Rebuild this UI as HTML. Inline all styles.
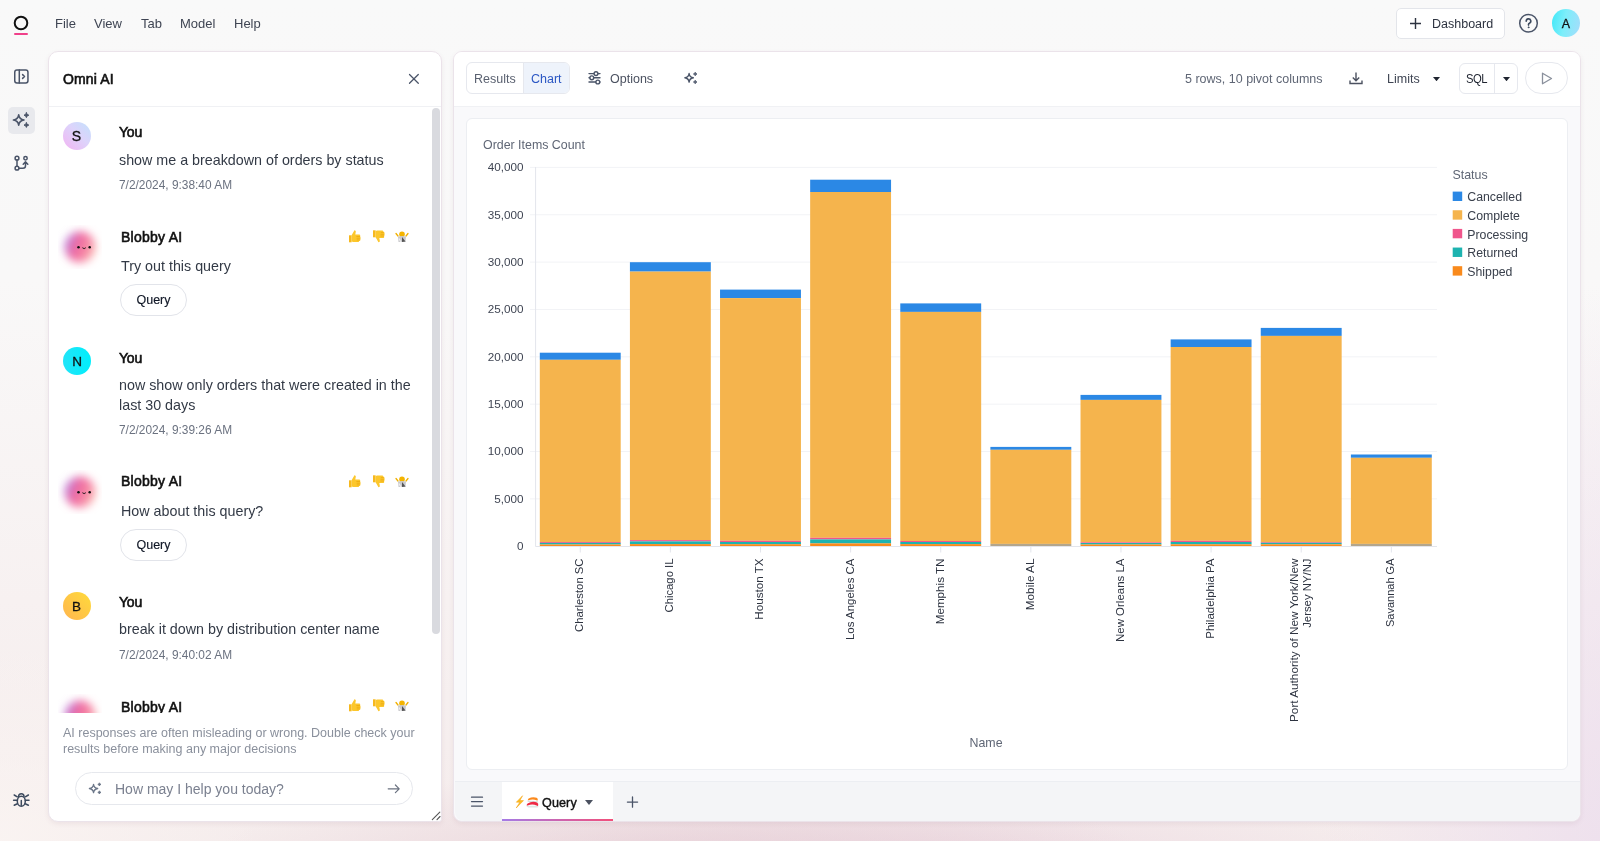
<!DOCTYPE html>
<html><head><meta charset="utf-8">
<style>
*{box-sizing:border-box;margin:0;padding:0}
html,body{width:1600px;height:841px;overflow:hidden}
body{font-family:"Liberation Sans",sans-serif;position:relative;
 background:radial-gradient(ellipse 480px 100px at 680px 870px,rgba(222,190,202,.55),rgba(222,190,202,0)),radial-gradient(ellipse 320px 560px at 1640px 840px,rgba(234,218,238,.7),rgba(234,218,238,0)),radial-gradient(ellipse 450px 80px at 950px 862px,rgba(232,208,220,.6),rgba(232,208,220,0)),radial-gradient(ellipse 260px 200px at 0px 841px,rgba(250,244,242,.9),rgba(250,244,242,0)),linear-gradient(180deg,#f9f9f9 0,#f9f8f8 280px,#f7f1f1 600px,#f5ecec 841px);color:#1f2430}
.a{position:absolute;white-space:nowrap}
.menu{font-size:13px;color:#3f4553;top:16px}
.panel{position:absolute;background:#fff;border:1px solid #ebe3ea;border-radius:9px;box-shadow:0 2px 5px rgba(120,60,90,.08)}
.hd{font-weight:normal;font-size:14px;color:#111;-webkit-text-stroke:0.6px #111}
.msg{font-size:14.3px;color:#333a46}
.ts{font-size:11.9px;color:#6b7280}
.qbtn{position:absolute;border:1px solid #e2e4ea;border-radius:16px;font-size:12.5px;color:#111827;text-align:center;background:#fff;-webkit-text-stroke:.15px #111827}
.tb{font-size:12.5px;color:#4b5160}
.blob{width:30px;height:30px;border-radius:50%;background:radial-gradient(circle at 60% 55%,#f0609a 0%,#f28ac0 35%,rgba(230,150,220,.6) 60%,rgba(255,255,255,0) 75%);filter:blur(2px)}
.blob::after{content:"\2022\2323\2022";position:absolute;left:14px;top:8px;font-size:7px;color:#111;letter-spacing:-1px}
.emo{width:62px;height:14px}
#chart text{font-family:"Liberation Sans",sans-serif}
.yl{font-size:11.7px;fill:#3f4553}
.xl{font-size:11.2px;fill:#2d3340}
.ax{font-size:12.4px;fill:#5f6675}
.lg{font-size:12.3px;fill:#3a404c}
</style></head>
<body>
<div id="wrap" style="position:absolute;left:0;top:0;width:1600px;height:841px;will-change:transform">
<!-- top menu -->
<svg class="a" style="left:13px;top:15px" width="16" height="21" viewBox="0 0 16 21">
 <circle cx="8" cy="8" r="6.3" fill="none" stroke="#111" stroke-width="2"/>
 <rect x="1" y="18" width="14" height="2" rx="1" fill="#f0408a"/>
</svg>
<div class="a menu" style="left:55px">File</div>
<div class="a menu" style="left:94px">View</div>
<div class="a menu" style="left:141px">Tab</div>
<div class="a menu" style="left:180px">Model</div>
<div class="a menu" style="left:234px">Help</div>

<!-- left rail -->
<div class="a" style="left:8px;top:106.5px;width:26.5px;height:27.5px;background:#e8e9ed;border-radius:5px"></div>
<svg class="a" style="left:0;top:0" width="48" height="841" viewBox="0 0 48 841" fill="none" stroke="#4a5468" stroke-width="1.5" stroke-linecap="round" stroke-linejoin="round">
 <rect x="14.75" y="70" width="13.2" height="13" rx="2.2"/><line x1="19.3" y1="70" x2="19.3" y2="83"/><path d="M22.6 74.6l1.9 1.9-1.9 1.9"/>
 <path d="M18.7 114.8Q19.3 119.4 24 120Q19.3 120.6 18.7 125.2Q18.1 120.6 13.4 120Q18.1 119.4 18.7 114.8Z" stroke-width="1.6"/>
 <path d="M26.4 112.8Q26.6 115 28.8 115.2Q26.6 115.4 26.4 117.6Q26.2 115.4 24 115.2Q26.2 115 26.4 112.8Z" fill="#4a5468" stroke-width="1"/>
 <path d="M26.4 122.8Q26.6 124.9 28.8 125.1Q26.6 125.3 26.4 127.4Q26.2 125.3 24 125.1Q26.2 124.9 26.4 122.8Z" fill="#4a5468" stroke-width="1"/>
 <circle cx="17" cy="158.2" r="1.9"/><circle cx="17" cy="168.2" r="1.9"/><circle cx="25.5" cy="158.2" r="1.7"/>
 <path d="M17 160.1v6.2M18.9 168.2h4.1a2.5 2.5 0 0 0 2.5-2.5v-3.6M23.2 164.2l2.3-2.3 2.3 2.3"/>
 <g stroke="#3d4a5e" stroke-width="1.5">
 <path d="M18.6 796.6a2.7 2.9 0 0 1 5.4 0"/><ellipse cx="21.3" cy="801.2" rx="4" ry="5"/><path d="M21.3 800.6v4.6M13.6 800.3h3.7M25.3 800.3h3.7M14.2 795l3.1 1.8M28.4 795l-3.1 1.8M14.2 805.3l3.2-1.5M28.4 805.3l-3.2-1.5"/>
 </g>
</svg>
<!-- left panel -->
<div class="panel" style="left:47.5px;top:51px;width:394.3px;height:770.5px;border-radius:10px 10px 3px 10px"></div>
<div class="a hd" style="left:63px;top:71px;letter-spacing:.14px">Omni AI</div>
<svg class="a" style="left:408px;top:73px" width="12" height="12" viewBox="0 0 12 12" stroke="#4a5468" stroke-width="1.25" stroke-linecap="round"><path d="M1.5 1.5l8.8 8.8M10.3 1.5l-8.8 8.8"/></svg>
<div class="a" style="left:49px;top:106px;width:392px;height:1px;background:#f0f1f4"></div>
<div class="a" style="left:432px;top:108px;width:8px;height:526px;background:#d9dadf;border-radius:4px"></div>


<!-- messages -->
<div class="a" style="left:63px;top:122px;width:28px;height:28px;border-radius:50%;background:linear-gradient(45deg,#f3b3f2 0%,#ddd3fb 55%,#c2e1fc 100%)"></div>
<div class="a" style="left:62.5px;top:128px;width:28px;text-align:center;font-size:14px;color:#111;-webkit-text-stroke:.3px #111">S</div>
<div class="a hd" style="left:119px;top:124px;letter-spacing:-.2px">You</div>
<div class="a msg" style="left:119px;top:152px">show me a breakdown of orders by status</div>
<div class="a ts" style="left:119px;top:178px">7/2/2024, 9:38:40 AM</div>

<svg class="a" style="left:58px;top:225px" width="44" height="44" viewBox="0 0 44 44"><defs><filter id="bl1" x="-50%" y="-50%" width="200%" height="200%"><feGaussianBlur stdDeviation="4.3"/></filter><linearGradient id="bg1" x1="0" y1="0.35" x2="1" y2="0.75"><stop offset="0" stop-color="#b583e2"/><stop offset="0.38" stop-color="#f0689e"/><stop offset="0.7" stop-color="#f68aa8"/><stop offset="1" stop-color="#fcc0aa"/></linearGradient></defs><circle cx="22" cy="22" r="15.5" fill="url(#bg1)" filter="url(#bl1)"/><circle cx="20.5" cy="22.3" r="1.25" fill="#111"/><circle cx="31.7" cy="22.3" r="1.25" fill="#111"/><path d="M24.4 22.7q1.7 1.9 3.4 0" fill="none" stroke="#111" stroke-width=".9"/></svg>
<div class="a hd" style="left:121px;top:229px;letter-spacing:.26px">Blobby AI</div>
<svg class="a" style="left:347px;top:229px" width="63" height="15" viewBox="0 0 63 15">
<g><path d="M2 6.3h2.6v7H2z" fill="#f6b81e"/><path d="M4.6 6.2 6.9 2.2Q7.2 1.2 8.1 1.4 9 1.7 8.8 2.8L8.3 5.4h3.9q1.1.1 1 1.2l-.1.6q.5.4.3 1.1.4.5.1 1.1.3.6-.1 1.2.2 1.2-1 1.3l-.3.2-.4.9H6.3l-1.7-.6z" fill="#fcc72c"/><path d="M9.4 7.5h3.6M9.6 9.2h3.3M9.8 10.9h2.9" stroke="#e59f06" stroke-width=".6"/></g>
<g transform="translate(24 0)"><path d="M2 1.3h2.6v7H2z" fill="#f6b81e"/><path d="M4.6 8.3 6.9 12.3Q7.2 13.3 8.1 13.1 9 12.8 8.8 11.7L8.3 9.1h3.9q1.1-.1 1-1.2l-.1-.6q.5-.4.3-1.1.4-.5.1-1.1.3-.6-.1-1.2.2-1.2-1-1.3l-.3-.2-.4-.9H6.3l-1.7.6z" fill="#fcc72c" transform="translate(0 0)"/><path d="M9.4 7h3.6M9.6 5.3h3.3M9.8 3.6h2.9" stroke="#e59f06" stroke-width=".6"/></g>
<g transform="translate(48 1)"><circle cx="7" cy="4.3" r="2.8" fill="#f4b400"/><path d="M1 3.5 3 6 M13 3.5 11 6" stroke="#f0b000" stroke-width="1.3" stroke-linecap="round"/><path d="M3 6.5Q7 5.5 11 6.5L10.5 12H3.5z" fill="#c9c9cc"/><path d="M7 7v5l3.5-.5" fill="#555" /><path d="M4 8.5 6 12" stroke="#eee" stroke-width="1.2"/></g>
</svg>
<div class="a msg" style="left:121px;top:258px">Try out this query</div>
<div class="qbtn" style="left:120px;top:284px;width:67px;height:32px;line-height:30px">Query</div>

<div class="a" style="left:63px;top:347px;width:28px;height:28px;border-radius:50%;background:linear-gradient(90deg,#22e4f8,#00effc)"></div>
<div class="a" style="left:63px;top:353.5px;width:28px;text-align:center;font-size:13.5px;color:#111;-webkit-text-stroke:.3px #111">N</div>
<div class="a hd" style="left:119px;top:350px;letter-spacing:-.2px">You</div>
<div class="a msg" style="left:119px;top:376px;line-height:19.6px">now show only orders that were created in the<br>last 30 days</div>
<div class="a ts" style="left:119px;top:423px">7/2/2024, 9:39:26 AM</div>

<svg class="a" style="left:58px;top:470px" width="44" height="44" viewBox="0 0 44 44"><defs><filter id="bl2" x="-50%" y="-50%" width="200%" height="200%"><feGaussianBlur stdDeviation="4.3"/></filter><linearGradient id="bg2" x1="0" y1="0.35" x2="1" y2="0.75"><stop offset="0" stop-color="#b583e2"/><stop offset="0.38" stop-color="#f0689e"/><stop offset="0.7" stop-color="#f68aa8"/><stop offset="1" stop-color="#fcc0aa"/></linearGradient></defs><circle cx="22" cy="22" r="15.5" fill="url(#bg2)" filter="url(#bl2)"/><circle cx="20.5" cy="22.3" r="1.25" fill="#111"/><circle cx="31.7" cy="22.3" r="1.25" fill="#111"/><path d="M24.4 22.7q1.7 1.9 3.4 0" fill="none" stroke="#111" stroke-width=".9"/></svg>
<div class="a hd" style="left:121px;top:473px;letter-spacing:.26px">Blobby AI</div>
<svg class="a" style="left:347px;top:474px" width="63" height="15" viewBox="0 0 63 15">
<g><path d="M2 6.3h2.6v7H2z" fill="#f6b81e"/><path d="M4.6 6.2 6.9 2.2Q7.2 1.2 8.1 1.4 9 1.7 8.8 2.8L8.3 5.4h3.9q1.1.1 1 1.2l-.1.6q.5.4.3 1.1.4.5.1 1.1.3.6-.1 1.2.2 1.2-1 1.3l-.3.2-.4.9H6.3l-1.7-.6z" fill="#fcc72c"/><path d="M9.4 7.5h3.6M9.6 9.2h3.3M9.8 10.9h2.9" stroke="#e59f06" stroke-width=".6"/></g>
<g transform="translate(24 0)"><path d="M2 1.3h2.6v7H2z" fill="#f6b81e"/><path d="M4.6 8.3 6.9 12.3Q7.2 13.3 8.1 13.1 9 12.8 8.8 11.7L8.3 9.1h3.9q1.1-.1 1-1.2l-.1-.6q.5-.4.3-1.1.4-.5.1-1.1.3-.6-.1-1.2.2-1.2-1-1.3l-.3-.2-.4-.9H6.3l-1.7.6z" fill="#fcc72c" transform="translate(0 0)"/><path d="M9.4 7h3.6M9.6 5.3h3.3M9.8 3.6h2.9" stroke="#e59f06" stroke-width=".6"/></g>
<g transform="translate(48 1)"><circle cx="7" cy="4.3" r="2.8" fill="#f4b400"/><path d="M1 3.5 3 6 M13 3.5 11 6" stroke="#f0b000" stroke-width="1.3" stroke-linecap="round"/><path d="M3 6.5Q7 5.5 11 6.5L10.5 12H3.5z" fill="#c9c9cc"/><path d="M7 7v5l3.5-.5" fill="#555" /><path d="M4 8.5 6 12" stroke="#eee" stroke-width="1.2"/></g>
</svg>
<div class="a msg" style="left:121px;top:503px">How about this query?</div>
<div class="qbtn" style="left:120px;top:529px;width:67px;height:32px;line-height:30px">Query</div>

<div class="a" style="left:63px;top:592px;width:28px;height:28px;border-radius:50%;background:linear-gradient(225deg,#ffdb3a,#ffb550)"></div>
<div class="a" style="left:62.5px;top:598.5px;width:28px;text-align:center;font-size:13.5px;color:#111;-webkit-text-stroke:.3px #111">B</div>
<div class="a hd" style="left:119px;top:594px;letter-spacing:-.2px">You</div>
<div class="a msg" style="left:119px;top:621px">break it down by distribution center name</div>
<div class="a ts" style="left:119px;top:648px">7/2/2024, 9:40:02 AM</div>

<div class="a" style="left:49px;top:690px;width:380px;height:22.7px;overflow:hidden">
 <svg class="a" style="left:9px;top:4px" width="44" height="44" viewBox="0 0 44 44"><defs><filter id="bl3" x="-50%" y="-50%" width="200%" height="200%"><feGaussianBlur stdDeviation="4.3"/></filter><linearGradient id="bg3" x1="0" y1="0.35" x2="1" y2="0.75"><stop offset="0" stop-color="#b583e2"/><stop offset="0.38" stop-color="#f0689e"/><stop offset="0.7" stop-color="#f68aa8"/><stop offset="1" stop-color="#fcc0aa"/></linearGradient></defs><circle cx="22" cy="22" r="15.5" fill="url(#bg3)" filter="url(#bl3)"/><circle cx="20.5" cy="22.3" r="1.25" fill="#111"/><circle cx="31.7" cy="22.3" r="1.25" fill="#111"/><path d="M24.4 22.7q1.7 1.9 3.4 0" fill="none" stroke="#111" stroke-width=".9"/></svg>
 <div class="a hd" style="left:72px;top:9px;letter-spacing:.26px">Blobby AI</div>
 <svg class="a" style="left:298px;top:8px" width="63" height="15" viewBox="0 0 63 15">
<g><path d="M2 6.3h2.6v7H2z" fill="#f6b81e"/><path d="M4.6 6.2 6.9 2.2Q7.2 1.2 8.1 1.4 9 1.7 8.8 2.8L8.3 5.4h3.9q1.1.1 1 1.2l-.1.6q.5.4.3 1.1.4.5.1 1.1.3.6-.1 1.2.2 1.2-1 1.3l-.3.2-.4.9H6.3l-1.7-.6z" fill="#fcc72c"/><path d="M9.4 7.5h3.6M9.6 9.2h3.3M9.8 10.9h2.9" stroke="#e59f06" stroke-width=".6"/></g>
<g transform="translate(24 0)"><path d="M2 1.3h2.6v7H2z" fill="#f6b81e"/><path d="M4.6 8.3 6.9 12.3Q7.2 13.3 8.1 13.1 9 12.8 8.8 11.7L8.3 9.1h3.9q1.1-.1 1-1.2l-.1-.6q.5-.4.3-1.1.4-.5.1-1.1.3-.6-.1-1.2.2-1.2-1-1.3l-.3-.2-.4-.9H6.3l-1.7.6z" fill="#fcc72c" transform="translate(0 0)"/><path d="M9.4 7h3.6M9.6 5.3h3.3M9.8 3.6h2.9" stroke="#e59f06" stroke-width=".6"/></g>
<g transform="translate(48 1)"><circle cx="7" cy="4.3" r="2.8" fill="#f4b400"/><path d="M1 3.5 3 6 M13 3.5 11 6" stroke="#f0b000" stroke-width="1.3" stroke-linecap="round"/><path d="M3 6.5Q7 5.5 11 6.5L10.5 12H3.5z" fill="#c9c9cc"/><path d="M7 7v5l3.5-.5" fill="#555" /><path d="M4 8.5 6 12" stroke="#eee" stroke-width="1.2"/></g>
</svg>
</div>
<div class="a" style="left:63px;top:726px;font-size:12.5px;line-height:15.8px;color:#8a909c">AI responses are often misleading or wrong. Double check your<br>results before making any major decisions</div>
<div class="a" style="left:75.3px;top:772px;width:338.2px;height:32.5px;border:1px solid #e6e8ed;border-radius:17px;background:#fff"></div>
<svg class="a" style="left:84px;top:778px" width="24" height="22" viewBox="84 778 24 22" fill="none" stroke="#6b7688" stroke-width="1.3" stroke-linejoin="round">
 <path d="M93.55 784.3Q94 788 97.7 788.5Q94 789 93.55 792.7Q93.1 789 89.4 788.5Q93.1 788 93.55 784.3Z"/>
 <path d="M99.4 782.8Q99.6 784.2 101 784.4Q99.6 784.6 99.4 786Q99.2 784.6 97.8 784.4Q99.2 784.2 99.4 782.8Z" fill="#6b7688" stroke-width=".8"/>
 <path d="M99.4 790.8Q99.6 792.2 101 792.4Q99.6 792.6 99.4 794Q99.2 792.6 97.8 792.4Q99.2 792.2 99.4 790.8Z" fill="#6b7688" stroke-width=".8"/>
</svg>
<div class="a" style="left:115px;top:781px;font-size:14px;color:#7b8190">How may I help you today?</div>
<svg class="a" style="left:386px;top:782px" width="15" height="14" viewBox="386 782 15 14" fill="none" stroke="#6b7280" stroke-width="1.2" stroke-linecap="round" stroke-linejoin="round"><path d="M388.2 788.8h11M395.4 785 399.2 788.8 395.4 792.6"/></svg>
<svg class="a" style="left:430px;top:810px" width="12" height="12" viewBox="430 810 12 12" stroke="#555" stroke-width="1.1" stroke-linecap="round"><path d="M439.8 812.1 432.3 819.6M440 816.5 437 819.6"/></svg>

<!-- top right -->
<div class="a" style="left:1396px;top:8px;width:109px;height:31px;border:1px solid #e3e5ea;border-radius:5px;background:#fff"></div>
<svg class="a" style="left:1409px;top:17px" width="13" height="13" viewBox="0 0 13 13" stroke="#2d3340" stroke-width="1.4"><path d="M6.5 1v11M1 6.5h11"/></svg>
<div class="a tb" style="left:1432px;top:17px;color:#2d3340">Dashboard</div>
<svg class="a" style="left:1510px;top:5px" width="40" height="40" viewBox="1510 5 40 40" fill="none" stroke="#4a5468" stroke-width="1.5" stroke-linecap="round"><circle cx="1528.5" cy="23.2" r="8.8"/><path d="M1526.2 21.2a2.3 2.3 0 1 1 3.2 2.1q-.9.4-.9 1.3v.5" stroke-width="1.6" stroke="#3d4a5e"/><circle cx="1528.5" cy="27.3" r=".45" fill="#3d4a5e" stroke="#3d4a5e" stroke-width="1"/></svg>
<div class="a" style="left:1552px;top:9.3px;width:27.6px;height:27.6px;border-radius:50%;background:linear-gradient(100deg,#3fe8f8 0%,#7deefa 45%,#a6dcfb 100%)"></div>
<div class="a" style="left:1552px;top:17px;width:28px;text-align:center;font-size:12.4px;color:#111;-webkit-text-stroke:.3px #111">A</div>

<!-- right panel -->
<div class="panel" style="left:453px;top:51px;width:1128px;height:771px;background:#f9f9fb;overflow:hidden">
 <div class="a" style="left:0;top:0;width:1128px;height:55px;background:#fff;border-bottom:1px solid #f0f1f4"></div>
</div>
<div class="a" style="left:466px;top:62px;width:104px;height:32px;border:1px solid #e6e8ee;border-radius:6px;overflow:hidden;background:#fff">
 <div class="a" style="left:56px;top:0;width:48px;height:32px;background:#eef3fb;border-left:1px solid #e6e8ee"></div>
</div>
<div class="a tb" style="left:474px;top:72px;color:#5a6170">Results</div>
<div class="a tb" style="left:531px;top:72px;color:#2b57c4">Chart</div>
<svg class="a" style="left:580px;top:66px" width="122" height="24" viewBox="580 66 122 24" fill="none" stroke="#4a5468" stroke-width="1.4" stroke-linecap="round">
 <path d="M589 73.6h11M589 77.8h11M589 82h11"/><circle cx="596" cy="73.6" r="1.9" fill="#fff"/><circle cx="591.8" cy="77.8" r="1.9" fill="#fff"/><circle cx="597.8" cy="82" r="1.9" fill="#fff"/>
</svg>
<div class="a tb" style="left:610px;top:72px;color:#4b5160">Options</div>
<svg class="a" style="left:680px;top:66px" width="24" height="24" viewBox="680 66 24 24" fill="none" stroke="#4a5468" stroke-width="1.4" stroke-linejoin="round">
 <path d="M689.1 73.5Q689.6 77.3 693.3 77.8Q689.6 78.3 689.1 82.1Q688.6 78.3 684.9 77.8Q688.6 77.3 689.1 73.5Z"/>
 <path d="M695.2 72.2Q695.4 73.8 697 74Q695.4 74.2 695.2 75.8Q695 74.2 693.4 74Q695 73.8 695.2 72.2Z" fill="#4a5468" stroke-width=".8"/>
 <path d="M695.2 80.2Q695.4 81.8 697 82Q695.4 82.2 695.2 83.8Q695 82.2 693.4 82Q695 81.8 695.2 80.2Z" fill="#4a5468" stroke-width=".8"/>
</svg>
<div class="a tb" style="left:1185px;top:72px;color:#5f6675">5 rows, 10 pivot columns</div>
<svg class="a" style="left:1349px;top:72px" width="14" height="13" viewBox="0 0 14 13" fill="none" stroke="#4b5160" stroke-width="1.4"><path d="M7 .5v8M3.8 5.5 7 8.7l3.2-3.2M1 8.5v3h12v-3"/></svg>
<div class="a tb" style="left:1387px;top:72px;color:#3f4553">Limits</div>
<svg class="a" style="left:1433px;top:76.5px" width="7" height="4.5" viewBox="0 0 7 4.5"><path d="M0 0h7L3.5 4.2z" fill="#1f2430"/></svg>
<div class="a" style="left:1459px;top:63px;width:59px;height:31px;border:1px solid #e6e8ee;border-radius:6px;background:#fff"><div class="a" style="left:34px;top:0;width:1px;height:29px;background:#e6e8ee"></div></div>
<div class="a tb" style="left:1466px;top:72px;color:#1f2430;letter-spacing:-0.6px;transform:scaleX(.9);transform-origin:0 0">SQL</div>
<svg class="a" style="left:1502.5px;top:76.5px" width="7" height="4.5" viewBox="0 0 7 4.5"><path d="M0 0h7L3.5 4.2z" fill="#1f2430"/></svg>
<div class="a" style="left:1525px;top:62px;width:43px;height:32px;border:1px solid #e6e8ee;border-radius:16px;background:#fff"></div>
<svg class="a" style="left:1541px;top:72px" width="12" height="13" viewBox="0 0 12 13" fill="none" stroke="#8a909c" stroke-width="1.3" stroke-linejoin="round"><path d="M1.5 1.2v10.6L10.5 6.5z"/></svg>

<!-- chart card -->
<div class="a" style="left:466px;top:118px;width:1102px;height:652px;background:#fff;border:1px solid #eceef2;border-radius:6px"></div>
<svg class="a" style="left:0;top:0" width="1600" height="841" id="chart"><line x1="530" y1="498.89" x2="1437" y2="498.89" stroke="#f2f3f6" stroke-width="1"/>
<text x="523.5" y="502.79" text-anchor="end" class="yl">5,000</text>
<line x1="530" y1="451.54" x2="1437" y2="451.54" stroke="#f2f3f6" stroke-width="1"/>
<text x="523.5" y="455.44" text-anchor="end" class="yl">10,000</text>
<line x1="530" y1="404.18" x2="1437" y2="404.18" stroke="#f2f3f6" stroke-width="1"/>
<text x="523.5" y="408.08" text-anchor="end" class="yl">15,000</text>
<line x1="530" y1="356.82" x2="1437" y2="356.82" stroke="#f2f3f6" stroke-width="1"/>
<text x="523.5" y="360.72" text-anchor="end" class="yl">20,000</text>
<line x1="530" y1="309.47" x2="1437" y2="309.47" stroke="#f2f3f6" stroke-width="1"/>
<text x="523.5" y="313.37" text-anchor="end" class="yl">25,000</text>
<line x1="530" y1="262.11" x2="1437" y2="262.11" stroke="#f2f3f6" stroke-width="1"/>
<text x="523.5" y="266.01" text-anchor="end" class="yl">30,000</text>
<line x1="530" y1="214.76" x2="1437" y2="214.76" stroke="#f2f3f6" stroke-width="1"/>
<text x="523.5" y="218.66" text-anchor="end" class="yl">35,000</text>
<line x1="530" y1="167.40" x2="1437" y2="167.40" stroke="#f2f3f6" stroke-width="1"/>
<text x="523.5" y="171.30" text-anchor="end" class="yl">40,000</text>
<text x="523.5" y="550.1" text-anchor="end" class="yl">0</text>
<line x1="535.6" y1="167" x2="535.6" y2="546.5" stroke="#e3e5ec" stroke-width="1"/>
<rect x="539.80" y="352.7" width="80.9" height="7.10" fill="#2b88e5"/>
<rect x="539.80" y="359.8" width="80.9" height="182.20" fill="#f5b44d"/>
<rect x="539.80" y="542.0" width="80.9" height="0.90" fill="#f0568c"/>
<rect x="539.80" y="542.9" width="80.9" height="1.60" fill="#1db3b0"/>
<rect x="539.80" y="544.5" width="80.9" height="1.50" fill="#f98a1c"/>
<line x1="580.25" y1="546" x2="580.25" y2="552.5" stroke="#e3e5ec" stroke-width="1"/>
<text transform="translate(583.25,558.5) rotate(-90)" text-anchor="end" class="xl" style="font-size:11.3px">Charleston SC</text>
<rect x="629.92" y="262.2" width="80.9" height="9.40" fill="#2b88e5"/>
<rect x="629.92" y="271.6" width="80.9" height="268.50" fill="#f5b44d"/>
<rect x="629.92" y="540.1" width="80.9" height="1.30" fill="#f0568c"/>
<rect x="629.92" y="541.4" width="80.9" height="2.70" fill="#1db3b0"/>
<rect x="629.92" y="544.1" width="80.9" height="1.90" fill="#f98a1c"/>
<line x1="670.37" y1="546" x2="670.37" y2="552.5" stroke="#e3e5ec" stroke-width="1"/>
<text transform="translate(673.37,558.5) rotate(-90)" text-anchor="end" class="xl" style="font-size:11.3px">Chicago IL</text>
<rect x="720.04" y="289.6" width="80.9" height="8.50" fill="#2b88e5"/>
<rect x="720.04" y="298.1" width="80.9" height="242.70" fill="#f5b44d"/>
<rect x="720.04" y="540.8" width="80.9" height="1.20" fill="#f0568c"/>
<rect x="720.04" y="542.0" width="80.9" height="2.20" fill="#1db3b0"/>
<rect x="720.04" y="544.2" width="80.9" height="1.80" fill="#f98a1c"/>
<line x1="760.49" y1="546" x2="760.49" y2="552.5" stroke="#e3e5ec" stroke-width="1"/>
<text transform="translate(763.49,558.5) rotate(-90)" text-anchor="end" class="xl" style="font-size:11.64px">Houston TX</text>
<rect x="810.16" y="179.7" width="80.9" height="12.30" fill="#2b88e5"/>
<rect x="810.16" y="192.0" width="80.9" height="345.80" fill="#f5b44d"/>
<rect x="810.16" y="537.8" width="80.9" height="1.60" fill="#f0568c"/>
<rect x="810.16" y="539.4" width="80.9" height="4.00" fill="#1db3b0"/>
<rect x="810.16" y="543.4" width="80.9" height="2.60" fill="#f98a1c"/>
<line x1="850.61" y1="546" x2="850.61" y2="552.5" stroke="#e3e5ec" stroke-width="1"/>
<text transform="translate(853.61,558.5) rotate(-90)" text-anchor="end" class="xl" style="font-size:11.46px">Los Angeles CA</text>
<rect x="900.28" y="303.4" width="80.9" height="8.50" fill="#2b88e5"/>
<rect x="900.28" y="311.9" width="80.9" height="229.10" fill="#f5b44d"/>
<rect x="900.28" y="541.0" width="80.9" height="1.00" fill="#f0568c"/>
<rect x="900.28" y="542.0" width="80.9" height="2.10" fill="#1db3b0"/>
<rect x="900.28" y="544.1" width="80.9" height="1.90" fill="#f98a1c"/>
<line x1="940.73" y1="546" x2="940.73" y2="552.5" stroke="#e3e5ec" stroke-width="1"/>
<text transform="translate(943.73,558.5) rotate(-90)" text-anchor="end" class="xl" style="font-size:11.65px">Memphis TN</text>
<rect x="990.40" y="446.9" width="80.9" height="2.90" fill="#2b88e5"/>
<rect x="990.40" y="449.8" width="80.9" height="94.10" fill="#f5b44d"/>
<rect x="990.40" y="543.9" width="80.9" height="2.10" fill="#b3a68c"/>
<line x1="1030.85" y1="546" x2="1030.85" y2="552.5" stroke="#e3e5ec" stroke-width="1"/>
<text transform="translate(1033.85,558.5) rotate(-90)" text-anchor="end" class="xl" style="font-size:11.8px">Mobile AL</text>
<rect x="1080.52" y="394.9" width="80.9" height="5.00" fill="#2b88e5"/>
<rect x="1080.52" y="399.9" width="80.9" height="142.40" fill="#f5b44d"/>
<rect x="1080.52" y="542.3" width="80.9" height="0.70" fill="#f0568c"/>
<rect x="1080.52" y="543.0" width="80.9" height="1.50" fill="#1db3b0"/>
<rect x="1080.52" y="544.5" width="80.9" height="1.50" fill="#f98a1c"/>
<line x1="1120.97" y1="546" x2="1120.97" y2="552.5" stroke="#e3e5ec" stroke-width="1"/>
<text transform="translate(1123.97,558.5) rotate(-90)" text-anchor="end" class="xl" style="font-size:11.47px">New Orleans LA</text>
<rect x="1170.64" y="339.4" width="80.9" height="7.60" fill="#2b88e5"/>
<rect x="1170.64" y="347.0" width="80.9" height="193.80" fill="#f5b44d"/>
<rect x="1170.64" y="540.8" width="80.9" height="1.20" fill="#f0568c"/>
<rect x="1170.64" y="542.0" width="80.9" height="2.30" fill="#1db3b0"/>
<rect x="1170.64" y="544.3" width="80.9" height="1.70" fill="#f98a1c"/>
<line x1="1211.09" y1="546" x2="1211.09" y2="552.5" stroke="#e3e5ec" stroke-width="1"/>
<text transform="translate(1214.09,558.5) rotate(-90)" text-anchor="end" class="xl" style="font-size:11.49px">Philadelphia PA</text>
<rect x="1260.76" y="327.9" width="80.9" height="8.00" fill="#2b88e5"/>
<rect x="1260.76" y="335.9" width="80.9" height="206.20" fill="#f5b44d"/>
<rect x="1260.76" y="542.1" width="80.9" height="0.70" fill="#f0568c"/>
<rect x="1260.76" y="542.8" width="80.9" height="1.50" fill="#1db3b0"/>
<rect x="1260.76" y="544.3" width="80.9" height="1.70" fill="#f98a1c"/>
<line x1="1301.21" y1="546" x2="1301.21" y2="552.5" stroke="#e3e5ec" stroke-width="1"/>
<text transform="translate(1297.91,558.5) rotate(-90)" text-anchor="end" class="xl" style="font-size:11.77px">Port Authority of New York/New</text>
<text transform="translate(1310.71,558.5) rotate(-90)" text-anchor="end" class="xl" style="font-size:11.35px">Jersey NY/NJ</text>
<rect x="1350.88" y="454.5" width="80.9" height="3.30" fill="#2b88e5"/>
<rect x="1350.88" y="457.8" width="80.9" height="86.10" fill="#f5b44d"/>
<rect x="1350.88" y="543.9" width="80.9" height="2.10" fill="#b3a68c"/>
<line x1="1391.33" y1="546" x2="1391.33" y2="552.5" stroke="#e3e5ec" stroke-width="1"/>
<text transform="translate(1394.33,558.5) rotate(-90)" text-anchor="end" class="xl" style="font-size:11.0px">Savannah GA</text>
<line x1="535.6" y1="546.5" x2="1437" y2="546.5" stroke="#e3e5ec" stroke-width="1"/>
<text x="483" y="149.3" class="ax">Order Items Count</text>
<text x="986" y="747" text-anchor="middle" class="ax">Name</text>
<text x="1452.5" y="179.1" class="ax">Status</text>
<rect x="1452.7" y="191.60" width="9.5" height="9.4" fill="#2b88e5"/>
<text x="1467.3" y="201.20" class="lg">Cancelled</text>
<rect x="1452.7" y="210.25" width="9.5" height="9.4" fill="#f5b44d"/>
<text x="1467.3" y="219.85" class="lg">Complete</text>
<rect x="1452.7" y="228.90" width="9.5" height="9.4" fill="#f0568c"/>
<text x="1467.3" y="238.50" class="lg">Processing</text>
<rect x="1452.7" y="247.55" width="9.5" height="9.4" fill="#1db3b0"/>
<text x="1467.3" y="257.15" class="lg">Returned</text>
<rect x="1452.7" y="266.20" width="9.5" height="9.4" fill="#f98a1c"/>
<text x="1467.3" y="275.80" class="lg">Shipped</text></svg>

<!-- bottom bar -->
<div class="a" style="left:455px;top:781px;width:1125px;height:1px;background:#eceef2"></div>
<div class="a" style="left:455px;top:782px;width:1125px;height:39px;background:#f4f5f7;border-radius:0 0 9px 9px"></div>
<svg class="a" style="left:470px;top:795px" width="15" height="13" viewBox="470 795 15 13" stroke="#4a5468" stroke-width="1.25" stroke-linecap="round"><path d="M471.5 797.2h11M471.5 801.6h11M471.5 806h11"/></svg>
<div class="a" style="left:502px;top:782px;width:111px;height:39px;background:#fff"></div>
<div class="a" style="left:502px;top:819px;width:111px;height:2px;background:linear-gradient(90deg,#a57be6,#f24f7a)"></div>
<svg class="a" style="left:514px;top:794px" width="26" height="16" viewBox="0 0 26 16">
<path d="M8.6 1.7 2.3 8.2h3.5L2.2 14 9.5 6.6H5.9z" fill="#fbbf24" stroke="#f59e0b" stroke-width=".5" stroke-linejoin="round"/>
<path d="M13.3 6.4Q13 8 16 8.2L23.5 8.6Q24.6 8.5 24 7.2z" fill="#d8dfdd"/>
<path d="M14.6 4.6Q18.5 2.6 22.6 3.8Q24.2 4.4 23.8 6.2Q23.4 6.9 22.4 6.2Q18.6 4.9 14.6 6.3Q13 6.4 14.6 4.6Z" fill="#fb8a1e"/>
<path d="M12.4 11.8Q12.5 13.6 16 13.6L23.6 13.4Q24.8 13 24.2 11.8z" fill="#dfe6e4"/>
<path d="M13.6 9.4Q18.6 6.6 23 8.6Q24.8 9.6 24.2 11.6Q23.8 12.4 22.6 11.6Q18.4 9.6 13.6 11.6Q11.6 11.6 13.6 9.4Z" fill="#ee2a45"/>
</svg>
<div class="a" style="left:542px;top:796px;font-size:12.6px;color:#111;-webkit-text-stroke:.4px #111;letter-spacing:.1px">Query</div>
<svg class="a" style="left:585px;top:800px" width="8" height="5" viewBox="0 0 8 5"><path d="M0 0h8L4 5z" fill="#4b5160"/></svg>
<svg class="a" style="left:625px;top:795px" width="15" height="15" viewBox="625 795 15 15" stroke="#4a5468" stroke-width="1.3" stroke-linecap="round"><path d="M632.5 797v10.2M627.4 802.1h10.2"/></svg>
</div>
</body></html>
